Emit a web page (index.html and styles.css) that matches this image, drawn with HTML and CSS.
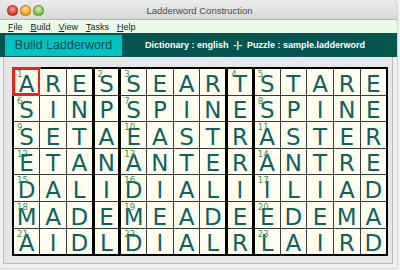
FILE: index.html
```html
<!DOCTYPE html>
<html lang="en">

<head>
    <meta charset="UTF-8">
    <title>Ladderword Construction</title>
    <link rel="stylesheet" href="styles.css">
</head>

<body>
    <div class="window">
        <div class="titlebar">
            <div class="lights">
                <span class="light red"></span>
                <span class="light yellow"></span>
                <span class="light green"></span>
            </div>
            <span class="title">Ladderword Construction</span>
        </div>

        <div class="menubar">
            <span><u>F</u>ile</span>
            <span><u>B</u>uild</span>
            <span><u>V</u>iew</span>
            <span><u>T</u>asks</span>
            <span><u>H</u>elp</span>
        </div>

        <div class="toolbar">
            <button class="build">Build Ladderword</button>
            <span class="info">Dictionary : english  -|-  Puzzle : sample.ladderword</span>
        </div>

        <div class="content">
            <div class="panel">
                <table class="grid" id="grid"></table>
            </div>
        </div>
    </div>

    <script>
        const rows = [
            'ARESSEARTSTARE',
            'SINPSPINESPINE',
            'SETAEASTRASTER',
            'ETANANTERANTRE',
            'DALIDIALIILIAD',
            'MADEMEADEEDEMA',
            'AIDLDIALRLAIRD'
        ];
        const thick = [3, 4, 8, 9];
        const grid = document.getElementById('grid');
        let num = 1;

        rows.forEach((word, r) => {
            const tr = document.createElement('tr');
            const starts = r === 0 ? [0, 3, 4, 8, 9] : [0, 4, 9];
            for (let c = 0; c < word.length; c++) {
                const td = document.createElement('td');
                if (thick.includes(c)) td.classList.add('wb');
                if (r === 0 && c === 0) td.classList.add('sel');
                if (starts.includes(c)) {
                    const n = document.createElement('span');
                    n.className = 'num';
                    n.textContent = num++;
                    td.appendChild(n);
                }
                td.appendChild(document.createTextNode(word[c]));
                tr.appendChild(td);
            }
            grid.appendChild(tr);
        });
    </script>
</body>

</html>
```

FILE: styles.css
```css
body {
    margin: 0;
    width: 400px;
    height: 270px;
    background-color: #f4f4f4;
    font-family: "Liberation Sans", Arial, sans-serif;
    overflow: hidden;
}

.window {
    width: 397px;
    height: 268px;
    display: flex;
    flex-direction: column;
    border-radius: 5px 5px 0 0;
    overflow: hidden;
    box-shadow: 0 0 2px rgba(0, 0, 0, 0.45);
    background: #ececec;
}

.titlebar {
    height: 19px;
    display: flex;
    align-items: center;
    justify-content: center;
    position: relative;
    background: linear-gradient(#ededed, #d8d8d8);
    border-bottom: 1px solid #b4b4b4;
}

.lights {
    position: absolute;
    left: 7px;
    top: 5px;
    display: flex;
    gap: 2px;
}

.light {
    width: 11px;
    height: 11px;
    border-radius: 50%;
    box-sizing: border-box;
    border: 1px solid rgba(0, 0, 0, 0.25);
}

.red {
    background: radial-gradient(circle at 50% 35%, #ff9d93, #e0443b 60%, #b8201a);
}

.yellow {
    background: radial-gradient(circle at 50% 35%, #ffe3a0, #f0b030 60%, #c88810);
}

.green {
    background: radial-gradient(circle at 50% 35%, #d6f0b0, #8cc452 60%, #5c9a28);
}

.title {
    font-size: 9.5px;
    color: #4a4a4a;
    margin-left: 2px;
    margin-top: 1px;
}

.menubar {
    height: 13px;
    display: flex;
    align-items: center;
    gap: 8px;
    padding-left: 8px;
    background: #eafbea;
    font-size: 9px;
    color: #222;
}

.menubar u {
    text-decoration-thickness: 1px;
    text-underline-offset: 1px;
}

.toolbar {
    height: 24px;
    display: flex;
    align-items: center;
    background: #03564f;
    padding-left: 5px;
    gap: 23px;
}

.build {
    flex-shrink: 0;
    height: 21px;
    width: 117px;
    border: none;
    padding: 0;
    background: #00c2c2;
    color: #034f4a;
    font-family: "Liberation Sans", Arial, sans-serif;
    font-size: 12.5px;
    white-space: nowrap;
}

.info {
    color: #fff;
    font-weight: bold;
    font-size: 9px;
    white-space: pre;
}

.content {
    flex: 1;
    padding: 0 4px 4px 3px;
    display: flex;
    background: #f0f0f0;
}

.panel {
    flex: 1;
    border: 1px solid #bdbdbd;
    border-top: none;
    background: #e6e6e6;
    padding: 10px 0 0 8px;
}

.grid {
    border-collapse: collapse;
    table-layout: fixed;
    width: 376px;
    border: 2px solid #000;
}

.grid td {
    position: relative;
    height: 25.6px;
    padding: 0;
    border: 1px solid #3a3a3a;
    background: #fffff0;
    text-align: center;
    vertical-align: bottom;
    font-family: "DejaVu Sans", sans-serif;
    font-size: 23px;
    line-height: 22px;
    color: #0e6262;
}

.grid td.wb {
    border-left: 3px solid #000;
}

.grid td.sel {
    outline: 3px solid #e8231d;
    outline-offset: -2px;
}

.num {
    position: absolute;
    left: 3px;
    top: 1px;
    font-size: 8.5px;
    line-height: 9px;
    color: #3f8a55;
}
```
